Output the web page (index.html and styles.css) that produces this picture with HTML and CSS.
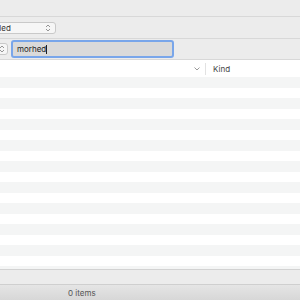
FILE: index.html
```html
<!DOCTYPE html>
<html lang="en">
<head>
<meta charset="UTF-8" />
<title>Find</title>
<link rel="stylesheet" href="styles.css">
</head>
<body>
  <div class="window">
    <div class="titlebar"></div>

    <div class="filterbar">
      <div class="popup">
        <span class="popup-label">Disabled</span>
        <svg class="updown" width="6" height="8" viewBox="0 0 6 8"><path d="M1 3 L3 1 L5 3 M1 5 L3 7 L5 5" fill="none" stroke="#8a8a8a" stroke-width="0.9"/></svg>
      </div>
    </div>

    <div class="searchbar">
      <div class="mini-popup">
        <svg class="updown" width="6" height="8" viewBox="0 0 6 8"><path d="M1 3 L3 1 L5 3 M1 5 L3 7 L5 5" fill="none" stroke="#8a8a8a" stroke-width="0.9"/></svg>
      </div>
      <div class="search-field">morhed<span class="caret"></span></div>
    </div>

    <div class="list-header">
      <div class="col col-name">
        <svg width="6" height="4" viewBox="0 0 6 4"><path d="M0.5 0.5 L3 3 L5.5 0.5" fill="none" stroke="#8f8f8f" stroke-width="0.9"/></svg>
      </div>
      <div class="col col-kind">Kind</div>
    </div>

    <div class="rows">
      <div class="row"></div><div class="row"></div>
      <div class="row"></div><div class="row"></div>
      <div class="row"></div><div class="row"></div>
      <div class="row"></div><div class="row"></div>
      <div class="row"></div><div class="row"></div>
      <div class="row"></div><div class="row"></div>
      <div class="row"></div><div class="row"></div>
      <div class="row"></div><div class="row"></div>
      <div class="row"></div><div class="row"></div>
      <div class="row"></div><div class="row"></div>
      <div class="row"></div><div class="row"></div>
      <div class="row"></div><div class="row"></div>
    </div>

    <div class="toolbar"></div>
    <div class="statusbar">0 items</div>
  </div>
</body>
</html>
```

FILE: styles.css
```css
body {
  margin: 0;
  background: #ececec;
  font-family: Inter, "Liberation Sans", sans-serif;
  color: #2b2b2b;
  overflow: hidden;
}
.window {
  width: 300px;
  height: 300px;
  display: flex;
  flex-direction: column;
  overflow: hidden;
}
.titlebar {
  height: 16px;
  flex: none;
  border-bottom: 1px solid #d8d8d8;
}
.filterbar {
  height: 21px;
  flex: none;
  display: flex;
  align-items: center;
  border-bottom: 1px solid #d8d8d8;
}
.popup {
  margin-left: -29px;
  width: 85px;
  height: 12px;
  box-sizing: border-box;
  display: flex;
  align-items: center;
  justify-content: space-between;
  padding: 0 4px 0 6px;
  background: #f6f6f6;
  border: 1px solid #c9c9c9;
  border-radius: 3px;
  font-size: 8px;
  color: #333;
}
.searchbar {
  height: 20px;
  flex: none;
  display: flex;
  align-items: center;
  gap: 3px;
  border-bottom: 1px solid #d8d8d8;
}
.mini-popup {
  margin-left: -4px;
  width: 12px;
  height: 12px;
  box-sizing: border-box;
  display: flex;
  align-items: center;
  justify-content: flex-end;
  padding-right: 2px;
  background: #f6f6f6;
  border: 1px solid #c9c9c9;
  border-radius: 3px;
}
.search-field {
  width: 163px;
  height: 18px;
  box-sizing: border-box;
  display: flex;
  align-items: center;
  padding-left: 4px;
  background: #dadada;
  border: 2px solid #79a6ea;
  border-radius: 3px;
  font-size: 8px;
  color: #222;
}
.caret {
  width: 1px;
  height: 9px;
  background: #222;
}
.list-header {
  height: 17px;
  flex: none;
  display: flex;
  align-items: center;
  background: #fff;
  font-size: 8px;
  color: #444;
}
.col-name {
  width: 206px;
  box-sizing: border-box;
  display: flex;
  justify-content: flex-end;
  padding-right: 5px;
  border-right: 1px solid #e2e2e2;
  height: 12px;
  align-items: center;
}
.col-kind {
  padding-left: 7px;
}
.rows {
  flex: 1;
  min-height: 0;
  display: flex;
  flex-direction: column;
  overflow: hidden;
  background: #fff;
}
.row {
  flex: none;
  height: 10px;
  background: #fff;
}
.row:nth-child(odd) {
  height: 11px;
  background: #f4f5f5;
}
.toolbar {
  height: 14px;
  flex: none;
  border-top: 1px solid #d2d2d2;
  border-bottom: 1px solid #cfcfcf;
  background: #ececec;
}
.statusbar {
  height: 15px;
  flex: none;
  display: flex;
  align-items: center;
  padding-left: 68px;
  background: linear-gradient(#e5e5e5, #d7d7d7);
  font-size: 8px;
  color: #555;
}
```
